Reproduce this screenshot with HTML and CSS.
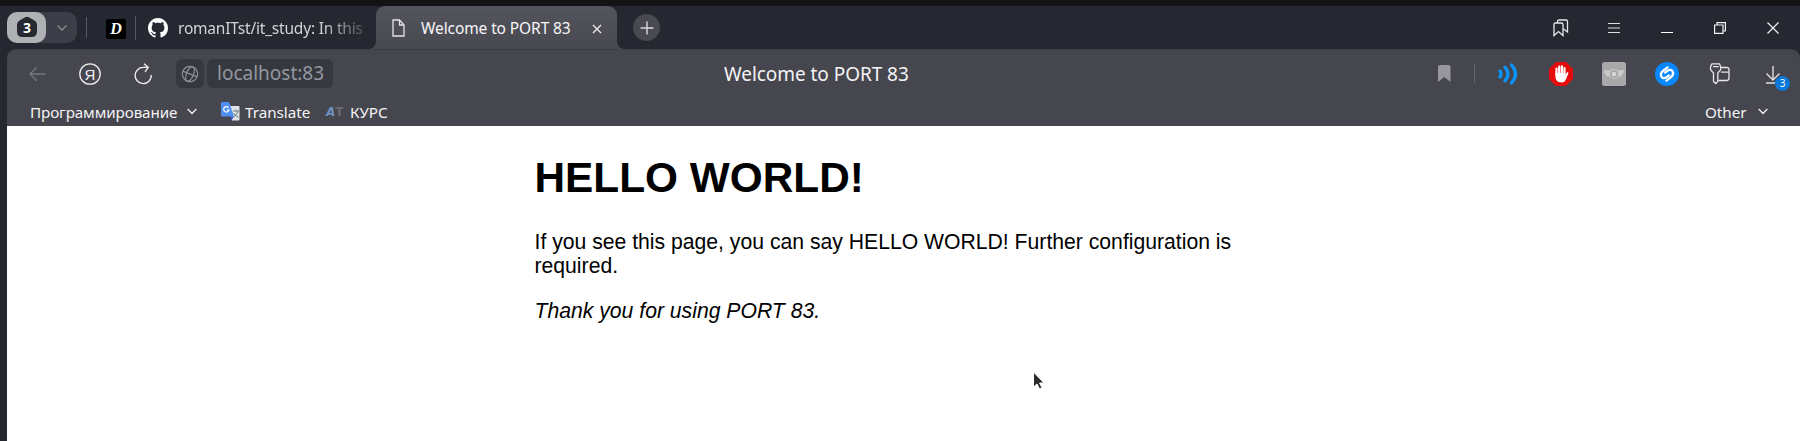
FILE: index.html
```
<!DOCTYPE html>
<html lang="en">
<head>
<meta charset="utf-8">
<title>Welcome to PORT 83</title>
<link rel="stylesheet" href="styles.css">
</head>
<body>
<header class="tabstrip">
  <div class="group">
    <div class="group-count"><svg width="20" height="22" viewBox="0 0 20 22"><path d="M3 4.2 8.200 1.300Q10 .3 11.800 1.300L17 4.200Q20 5.800 20 8.500V15.500Q20 21 14.500 21H5.500Q0 21 0 15.500V8.500Q0 5.800 3 4.200Z" fill="#262830"/><text x="10" y="16.500" text-anchor="middle">3</text></svg></div>
    <svg class="group-chevron" width="12" height="8" viewBox="0 0 12 8"><path d="M1.500 1.500 6 6l4.500-4.500" fill="none" stroke="#8b8c93" stroke-width="1.300"/></svg>
  </div>
  <i class="divider first"></i>
  <div class="pinned">D</div>
  <i class="divider second"></i>
  <div class="tab">
    <svg width="20" height="20" viewBox="0 0 16 16"><path fill="#fff" d="M8 0C3.580 0 0 3.580 0 8c0 3.540 2.290 6.530 5.470 7.590.4.070.55-.17.55-.38 0-.19-.01-.82-.01-1.490-2.010.37-2.530-.49-2.690-.94-.09-.23-.48-.94-.82-1.130-.28-.15-.68-.52-.01-.53.63-.01 1.080.58 1.230.82.72 1.210 1.870.87 2.330.66.070-.52.28-.87.51-1.070-1.780-.2-3.640-.89-3.640-3.950 0-.87.31-1.590.82-2.150-.08-.2-.36-1.020.08-2.120 0 0 .67-.21 2.200.82.64-.18 1.320-.27 2-.27s1.360.09 2 .27c1.530-1.040 2.200-.82 2.200-.82.44 1.100.16 1.920.08 2.120.51.56.82 1.270.82 2.150 0 3.070-1.870 3.750-3.650 3.950.29.25.54.73.54 1.480 0 1.070-.01 1.930-.01 2.200 0 .21.15.46.55.38A8.010 8.010 0 0 0 16 8c0-4.420-3.580-8-8-8z"/></svg>
    <span class="tab-title faded">romanITst/it_study: In this</span>
  </div>
  <div class="tab active">
    <svg width="13" height="18" viewBox="0 0 13 18"><path d="M1 1h6.500L12 6v11H1zM7.500 1v5H12" fill="none" stroke="#e4e4e6" stroke-width="1.300"/></svg>
    <span class="tab-title">Welcome to PORT 83</span>
    <svg class="tab-close" width="10" height="10" viewBox="0 0 10 10"><path d="m1 1 8 8M9 1 1 9" stroke="#f0f0f0" stroke-width="1.200"/></svg>
  </div>
  <div class="new-tab"><svg width="14" height="14" viewBox="0 0 14 14"><path d="M7 .5v13M.5 7h13" stroke="#d8d8da" stroke-width="1.400"/></svg></div>
  <div class="window-tools">
    <svg width="16" height="18" viewBox="0 0 16 18"><path d="M1 5.500q0-1.500 1.500-1.500h6Q10 4 10 5.500v11l-4.500-4L1 16.500ZM4.500 4V2.500Q4.500 1 6 1h7q1.500 0 1.500 1.500v10.500L10.500 10" fill="none" stroke="#e8e8ea" stroke-width="1.300"/></svg>
    <svg width="12" height="12" viewBox="0 0 12 12"><path d="M0 1.500h12M0 6h12M0 10.500h12" stroke="#e0e0e2" stroke-width="1.200"/></svg>
    <svg width="12" height="12" viewBox="0 0 12 12"><path d="M0 10.500h12" stroke="#fff" stroke-width="1"/></svg>
    <svg width="12" height="12" viewBox="0 0 12 12"><path d="M.6 3h8.400v8.400H.6zM3 3V.6h8.400V9H9" fill="none" stroke="#f0f0f2" stroke-width="1.200"/></svg>
    <svg width="12" height="12" viewBox="0 0 12 12"><path d="m.5.5 11 11m0-11-11 11" stroke="#f0f0f2" stroke-width="1.200"/></svg>
  </div>
</header>
<div class="frame">
  <section class="chrome">
    <nav class="toolbar">
      <svg class="back" width="17" height="16" viewBox="0 0 17 16"><path d="M16.500 8H1M8 1 1 8l7 7" fill="none" stroke="#77777e" stroke-width="1.300"/></svg>
      <svg class="yandex" width="22" height="22" viewBox="0 0 22 22"><circle cx="11" cy="11" r="10.200" fill="none" stroke="#eeeeef" stroke-width="1.300"/><text x="11" y="16.500" text-anchor="middle">Я</text></svg>
      <svg class="reload" width="19" height="22" viewBox="0 0 19 22"><path d="M17.300 12A8.100 8.100 0 1 1 9.500 4.400H14M10 .7 14.300 4.400 11 8.800" fill="none" stroke="#eeeeef" stroke-width="1.400"/></svg>
      <div class="site"><svg width="18" height="18" viewBox="0 0 18 18"><g transform="rotate(22 9 9)" fill="none" stroke="#8e8f97" stroke-width="1.200"><circle cx="9" cy="9" r="7.700"/><ellipse cx="9" cy="9" rx="3.600" ry="7.700"/><path d="M1.300 9h15.400"/></g></svg></div>
      <div class="host"><span>localhost:83</span></div>
      <div class="page-title"><span>Welcome to PORT 83</span></div>
      <svg class="save" width="13" height="17" viewBox="0 0 13 17"><path d="M0 2Q0 0 2 0h8.500q2 0 2 2v15l-6.200-5L0 17Z" fill="#97979d"/></svg>
      <i class="tool-divider"></i>
      <div class="extensions">
        <svg width="24" height="24" viewBox="0 0 24 24"><path d="M4 9Q6 12 4 15M9 5.200q6 6.800 0 13.600M15.500 3q8 9 0 18" fill="none" stroke="#0a93fb" stroke-width="3.300" stroke-linecap="round"/></svg>
        <svg width="24" height="24" viewBox="0 0 24 24"><path d="M7 0h10l7 7v10l-7 7H7l-7-7V7Z" fill="#e60b0d"/><path d="M7.500 13V6.500M10.200 12V4.500M12.900 12V4.300M15.500 12V6" stroke="#fff" stroke-width="2.200" stroke-linecap="round"/><path d="M6.400 11h10.200v2.400l1-2.700q.8-1 1.500-.4.500.5.100 1.400l-2.200 5.600Q15.700 20.500 12.500 20.500 6.400 20.500 6.400 14Z" fill="#fff"/></svg>
        <svg width="24" height="24" viewBox="0 0 24 24"><rect width="24" height="24" rx="2.500" fill="#a8a8a8"/><path d="M2 8q4 0 5.500.5Q12 5.500 16.500 8.500 19 8 22 8q-.5 6.500-5.500 6.800Q12 19 7.500 14.800 2.500 14.500 2 8Z" fill="#c9c9c9"/><circle cx="12" cy="12" r="4" fill="#a6a6a6"/><circle cx="12" cy="12" r="2.200" fill="#d8d8d8"/></svg>
        <svg width="24" height="24" viewBox="0 0 24 24"><circle cx="12" cy="12" r="12" fill="#0788ff"/><path d="M12.600 5.400 8 8.800C3.600 12.400 7 18 11 15.600L13.800 13.500M11.400 18.600 16 15.200C20.400 11.600 17 6 13 8.400L10.200 10.500" fill="none" stroke="#fff" stroke-width="2.300" stroke-linecap="round"/></svg>
        <svg width="24" height="24" viewBox="0 0 24 24"><path d="M4 1.800h7.500q2 2.700 1 6.200L9.800 11v8.500L7.700 21.500 5.500 19.500V11L2.700 8Q1.800 4.500 4 1.800ZM5 4.700h5.700M13.500 5.500h5.300q2.200 0 2.200 2V16q0 2.500-2.500 2.500h-8M13 10.200h8" fill="none" stroke="#e5e5e7" stroke-width="1.300"/></svg>
        <div class="download"><svg width="24" height="24" viewBox="0 0 24 24"><path d="M12 4v14M5.500 11.500 12 18l6.500-6.500M5 21h13" fill="none" stroke="#e0e0e2" stroke-width="1.400"/></svg><b>3</b></div>
      </div>
    </nav>
    <nav class="bookmarks">
      <span class="folder">Программирование</span>
      <svg class="folder-chevron" width="10" height="7" viewBox="0 0 10 7"><path d="m.7 1 4.300 4.500L9.300 1" fill="none" stroke="#f0f0f0" stroke-width="1.300"/></svg>
      <svg class="translate-icon" width="19" height="19" viewBox="0 0 19 19"><path d="M8 4h9.500q1 0 1 1v12.500q0 1-1 1H11Z" fill="#e0e3e6"/><path d="M12 9h6M15 7.500V9m2 0q-1 4-4.500 6m0-4q2 3.500 5 4" fill="none" stroke="#6f7f85" stroke-width="1"/><path d="m9 14 4 .5-2.500 4Z" fill="#3558c8"/><path d="M1 0h7l5 14.500H1q-1 0-1-1V1q0-1 1-1Z" fill="#4f8ef0"/><path d="M7.500 5.600A2.700 2.700 0 1 0 8 8H5.700" fill="none" stroke="#fff" stroke-width="1.200"/></svg>
      <span class="translate">Translate</span>
      <span class="at-icon">A<em>T</em></span>
      <span class="course">КУРС</span>
      <span class="other">Other</span>
      <svg class="other-chevron" width="10" height="7" viewBox="0 0 10 7"><path d="m.7 1 4.300 4.500L9.300 1" fill="none" stroke="#f0f0f0" stroke-width="1.300"/></svg>
    </nav>
  </section>
  <main>
    <h1>HELLO WORLD!</h1>
    <p>If you see this page, you can say HELLO WORLD! Further configuration is required.</p>
    <p><em>Thank you for using PORT 83.</em></p>
  </main>
</div>
<svg class="cursor" width="14" height="20" viewBox="0 0 14 20"><path d="M1.500 1v15l3.500-3 2.500 5 2.500-1.300L7.600 12H12Z" fill="#2d2d2d" stroke="#fff" stroke-width="1"/></svg>
</body>
</html>
```
FILE: styles.css
```
* { box-sizing: border-box; }
html, body { height: 441px; overflow: hidden; }
body { margin: 0; background: #252831; color: #f4f4f5; font-family: "Noto Sans", sans-serif; }
svg { display: block; flex: none; }
span { white-space: nowrap; }
.tabstrip { height: 49px; border-top: 6px solid #131313; padding-left: 7px; display: flex; align-items: center; }
.group { width: 70px; height: 31px; margin-top: -1px; border-radius: 10px; background: #3d3e47; display: flex; align-items: center; flex: none; }
.group-count { width: 39px; height: 31px; border-radius: 10px; background: #b0b1b5; display: flex; align-items: center; justify-content: center; }
.group-count text { fill: #fff; font: bold 14px "Noto Sans", sans-serif; }
.group-chevron { margin-left: 10px; margin-top: 2px; }
.divider { width: 1px; background: #575962; flex: none; }
.first { height: 21px; margin-left: 9px; }
.second { height: 24px; margin-left: 9px; }
.pinned { width: 20px; height: 20px; margin: 3px 0 0 19px; background: #000; border-radius: 2px; color: #fff; text-align: center; font: italic bold 16px/20px "Liberation Serif", serif; }
.tab { display: flex; align-items: center; width: 240px; height: 43px; padding-left: 12px; flex: none; }
.tab-title { font-size: 15.5px; line-height: 22px; color: #d2d3d6; margin-left: 10px; }
.tab.active { position: relative; width: 241px; padding-left: 16px; border-radius: 9px 9px 0 0; background: linear-gradient(#54545d, #484851); }
.tab.active::before, .tab.active::after { content: ""; position: absolute; bottom: 0; width: 7px; height: 7px; }
.tab.active::before { right: 100%; background: radial-gradient(circle at 0 0, transparent 6.500px, #484851 7px); }
.tab.active::after { left: 100%; background: radial-gradient(circle at 100% 0, transparent 6.500px, #484851 7px); }
.active .tab-title { color: #f6f6f7; margin-left: 16px; width: 150px; letter-spacing: -.1px; }
.faded { width: 190px; letter-spacing: -.2px; -webkit-mask-image: linear-gradient(90deg, #000 75%, transparent 104%); mask-image: linear-gradient(90deg, #000 75%, transparent 104%); }
.tab-close { margin: 2px 0 0 21px; }
.new-tab { width: 27px; height: 27px; border-radius: 50%; background: #484951; margin-left: 16px; display: flex; align-items: center; justify-content: center; flex: none; }
.window-tools { margin-left: auto; margin-right: 21px; display: flex; align-items: center; gap: 41px; }
.window-tools svg:first-child { margin-right: -2px; }
.frame { margin-left: 7px; }
.chrome { height: 77px; border-radius: 9px 9px 0 0; background: #46464f; border-top: 1px solid #3e3e47; }
.toolbar { height: 47px; display: flex; align-items: center; }
.back { margin-left: 22px; }
.yandex { margin-left: 33px; margin-top: 1px; }
.yandex text { fill: #eeeeef; font: 15px "Liberation Sans", sans-serif; }
.reload { margin-left: 33px; }
.site { width: 28px; height: 29px; margin-left: 23px; border-radius: 6px; background: #363840; display: flex; align-items: center; justify-content: center; flex: none; }
.host { width: 126px; height: 29px; margin-left: 3px; border-radius: 6px; background: #363840; color: #95969e; padding-left: 10px; font-size: 19px; line-height: 28px; flex: none; }
.page-title { margin-left: 391px; width: 714px; font-size: 19px; line-height: 28px; letter-spacing: -.05px; flex: none; }
.tool-divider { width: 1px; height: 19px; margin-left: 23px; background: #64646c; }
.extensions { display: flex; gap: 29px; margin-left: 21px; }
.download { position: relative; }
.download b { position: absolute; left: 14px; top: 14px; width: 15px; height: 15px; border-radius: 50%; background: #0878d9; color: #fff; font: 10px/15px "Noto Sans", sans-serif; text-align: center; }
.bookmarks { height: 29px; display: flex; align-items: center; font-size: 15.2px; line-height: 22px; }
.folder { margin-left: 23px; width: 148px; letter-spacing: -.1px; }
.folder-chevron { margin-left: 9px; }
.translate-icon { margin-left: 24px; }
.translate { margin-left: 5px; width: 66px; }
.at-icon { margin-left: 15px; width: 20px; color: #6d91bf; font: italic bold 12px/20px "DejaVu Sans", sans-serif; }
.at-icon em { color: #6b6b70; font-style: normal; }
.course { margin-left: 4px; }
.other { margin-left: auto; width: 42px; }
.other-chevron { margin: 0 32px 0 11px; }
main { height: 315px; background: #fff; color: #000; padding: 27px 0 0 527.500px; font: 21.180px/24px "Liberation Sans", Arial, sans-serif; }
h1 { margin: 0; font-size: 42.360px; line-height: 49px; }
p { margin: 28px 0 0; width: 738px; }
p + p { margin-top: 21px; }
.cursor { position: absolute; left: 1032px; top: 371px; }
```
